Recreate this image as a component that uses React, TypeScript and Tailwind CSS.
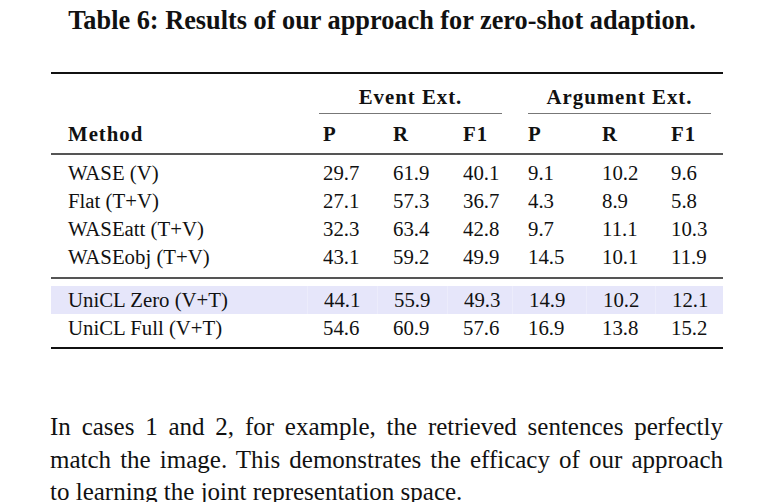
import React from "react";

const COLS = "grid grid-cols-[256px_70px_70px_65px_74px_69px_68px]";

type RowData = { m: string; v: string[] };

const groupA: RowData[] = [
  { m: "WASE (V)", v: ["29.7", "61.9", "40.1", "9.1", "10.2", "9.6"] },
  { m: "Flat (T+V)", v: ["27.1", "57.3", "36.7", "4.3", "8.9", "5.8"] },
  { m: "WASEatt (T+V)", v: ["32.3", "63.4", "42.8", "9.7", "11.1", "10.3"] },
  { m: "WASEobj (T+V)", v: ["43.1", "59.2", "49.9", "14.5", "10.1", "11.9"] },
];

function Row({ d, hl }: { d: RowData; hl?: boolean }) {
  return (
    <div className={`${COLS} h-[28px] leading-[28px] ${hl ? "bg-[#e6e6fa]" : ""}`}>
      <div className="pl-[17px] whitespace-nowrap">{d.m}</div>
      {d.v.map((x, i) => (
        <div
          key={i}
          className={`pl-4 whitespace-nowrap ${hl ? "border-l border-[#ececfb]" : ""}`}
        >
          {x}
        </div>
      ))}
    </div>
  );
}

export default function App() {
  return (
    <div className="w-[764px] h-[502px] bg-white text-[#111] font-['Liberation_Serif',serif] overflow-hidden">
      <h1 className="pt-[6px] text-center text-[26.3px] font-bold leading-[30px]">
        Table 6: Results of our approach for zero-shot adaption.
      </h1>

      <div className="ml-[51px] mt-[36px] w-[672px] text-[20.8px]">
        <div className="h-[2px] bg-[#111]" />

        <div className={`${COLS} pt-[11px] font-bold tracking-[1px]`}>
          <div />
          <div className="col-span-3 ml-[12px] mr-[10px] flex flex-col">
            <div className="text-center leading-[24px] pb-[4px]">Event Ext.</div>
            <div className="h-px bg-[#777]" />
          </div>
          <div className="col-span-3 ml-[16px] mr-[12px] flex flex-col">
            <div className="text-center leading-[24px] pb-[4px]">Argument Ext.</div>
            <div className="h-px bg-[#777]" />
          </div>
        </div>

        <div className={`${COLS} pt-[8px] pb-[7px] leading-[24px] font-bold tracking-[1px]`}>
          <div className="pl-[17px]">Method</div>
          <div className="pl-4">P</div>
          <div className="pl-4">R</div>
          <div className="pl-4">F1</div>
          <div className="pl-4">P</div>
          <div className="pl-4">R</div>
          <div className="pl-4">F1</div>
        </div>
        <div className="h-[2px] bg-[#555]" />

        <div className="pt-[4px] pb-[6px]">
          {groupA.map((d) => (
            <Row key={d.m} d={d} />
          ))}
        </div>
        <div className="h-[2px] bg-[#555]" />

        <div className="pt-[7px] pb-[5px]">
          <Row hl d={{ m: "UniCL Zero (V+T)", v: ["44.1", "55.9", "49.3", "14.9", "10.2", "12.1"] }} />
          <Row d={{ m: "UniCL Full (V+T)", v: ["54.6", "60.9", "57.6", "16.9", "13.8", "15.2"] }} />
        </div>
        <div className="h-[2px] bg-[#111]" />
      </div>

      <p className="ml-[50px] mt-[62px] w-[673px] text-[25px] leading-[32.5px]">
        <span className="block [text-align-last:justify] text-justify">
          In cases 1 and 2, for example, the retrieved sentences perfectly
        </span>
        <span className="block [text-align-last:justify] text-justify">
          match the image. This demonstrates the efficacy of our approach
        </span>
        <span className="block">to learning the joint representation space.</span>
      </p>
    </div>
  );
}
